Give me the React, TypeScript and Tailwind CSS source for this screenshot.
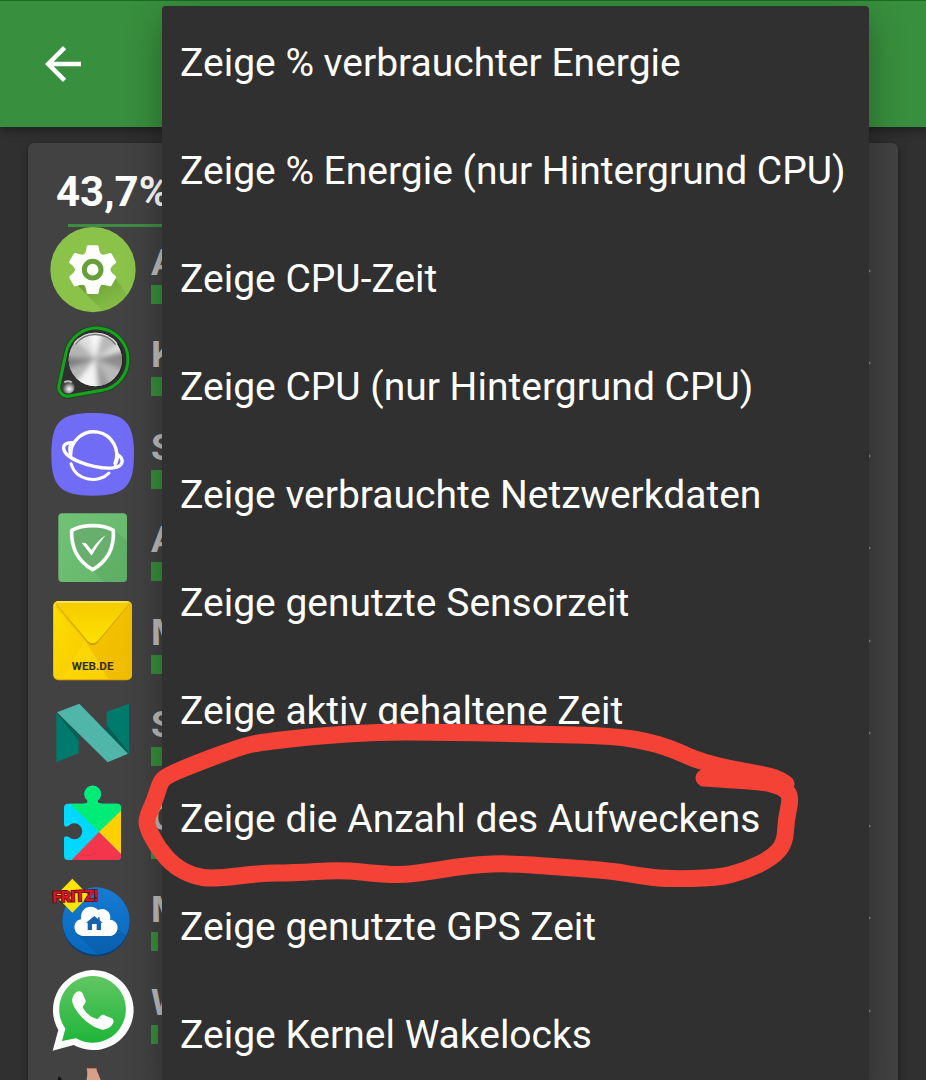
import type { ReactNode } from "react";
import { MdArrowBack } from "react-icons/md";

const menuItems = [
  "Zeige % verbrauchter Energie",
  "Zeige % Energie (nur Hintergrund CPU)",
  "Zeige CPU-Zeit",
  "Zeige CPU (nur Hintergrund CPU)",
  "Zeige verbrauchte Netzwerkdaten",
  "Zeige genutzte Sensorzeit",
  "Zeige aktiv gehaltene Zeit",
  "Zeige die Anzahl des Aufweckens",
  "Zeige genutzte GPS Zeit",
  "Zeige Kernel Wakelocks",
];

function Icon({ top, children }: { top: number; children: ReactNode }) {
  return (
    <svg viewBox={`78 ${top} 276 276`} className="size-[92px] shrink-0" aria-hidden="true">
      {children}
    </svg>
  );
}

function AndroidIcon() {
  return (
    <Icon top={12}>
      <defs>
        <clipPath id="android-disc">
          <circle cx="219" cy="149" r="128" />
        </clipPath>
        <linearGradient id="android-shade" x1="0" y1="0" x2="1" y2="1">
          <stop offset="0.1" stopColor="#4f7d25" stopOpacity="0.6" />
          <stop offset="0.75" stopColor="#6da035" stopOpacity="0.1" />
        </linearGradient>
      </defs>
      <circle cx="219" cy="149" r="128" fill="#8bc34a" />
      <path clipPath="url(#android-disc)" d="M160 184L270 294H370L286 174Z" fill="url(#android-shade)" />
      <g fill="#fff">
        <circle cx="218" cy="149" r="53" />
        {[0, 60, 120, 180, 240, 300].map((angle) => (
          <path
            key={angle}
            transform={`rotate(${angle} 218 149)`}
            d="M190 106Q198 98 200 80Q201 76 205 76H231Q235 76 236 80Q238 98 246 106Z"
          />
        ))}
      </g>
      <circle cx="218" cy="149" r="25" fill="#fff" stroke="#689f38" strokeWidth="15" />
    </Icon>
  );
}

function KnobIcon() {
  const wedges = [
    [0, 22, "#8f8f8f"],
    [22, 60, "#b9b9b9"],
    [60, 85, "#9c9c9c"],
    [85, 130, "#f4f4f4"],
    [130, 160, "#b5b5b5"],
    [160, 185, "#7f7f7f"],
    [185, 225, "#b5b5b5"],
    [225, 255, "#dedede"],
    [255, 285, "#f8f8f8"],
    [285, 325, "#b8b8b8"],
    [325, 345, "#e0e0e0"],
    [345, 360, "#858585"],
  ] as const;
  const body = "M138 399A94 94 0 1 1 246 511L148 528A27 27 0 0 1 117 496Z";
  return (
    <Icon top={288}>
      <defs>
        <clipPath id="knob-disc">
          <circle cx="226" cy="419" r="80" />
        </clipPath>
        <filter id="knob-soft">
          <feGaussianBlur stdDeviation="8" />
        </filter>
        <radialGradient id="knob-ball" cx="0.6" cy="0.65">
          <stop offset="0" stopColor="#fff" />
          <stop offset="0.5" stopColor="#aaa" />
          <stop offset="1" stopColor="#444" />
        </radialGradient>
      </defs>
      <path d={body} fill="#333" stroke="#1d4a1e" strokeWidth="15" strokeLinejoin="round" />
      <path d={body} fill="#303030" stroke="#16a41e" strokeWidth="9" strokeLinejoin="round" />
      <circle cx="228" cy="419" r="83" fill="#242424" />
      <g clipPath="url(#knob-disc)">
        <rect x="140" y="330" width="180" height="180" fill="#aaa" />
        <g filter="url(#knob-soft)">
          {wedges.map(([from, to, fill]) => {
            const a = (from * Math.PI) / 180;
            const b = (to * Math.PI) / 180;
            return (
              <path
                key={from}
                fill={fill}
                d={`M226 417L${226 + 120 * Math.cos(a)} ${417 + 120 * Math.sin(a)}L${226 + 120 * Math.cos(b)} ${417 + 120 * Math.sin(b)}Z`}
              />
            );
          })}
        </g>
      </g>
      <path d="M163 372A80 80 0 0 1 290 372" fill="none" stroke="#d8d8d8" strokeWidth="7" />
      <path d="M166 373A76 76 0 0 1 287 374" fill="none" stroke="#777" strokeWidth="4" />
      <circle cx="144" cy="501" r="20" fill="url(#knob-ball)" />
      <path d="M133 487Q144 480 155 487" fill="none" stroke="#bbb" strokeWidth="6" />
    </Icon>
  );
}

function PlanetIcon() {
  return (
    <Icon top={27}>
      <path d="M218 39C315 39 342 66 342 163S315 287 218 287S94 260 94 163S121 39 218 39Z" fill="#706cf5" />
      <g fill="none" stroke="#fff" strokeWidth="10" strokeLinecap="round">
        <path d="M152 166A69 69 0 1 1 285 190" />
        <path d="M157 128C139 127 129 134 131 146C135 169 176 188 222 199C267 209 302 205 306 187C308 178 302 169 290 163" />
        <path d="M151 131Q145 145 151 166M293 163Q296 179 285 196" strokeWidth="7" />
        <path d="M153 191C168 244 238 251 267 219" strokeWidth="9" />
      </g>
    </Icon>
  );
}

function ShieldIcon() {
  return (
    <Icon top={303}>
      <defs>
        <linearGradient id="shield-bg" x1="0" y1="0" x2="1" y2="1">
          <stop offset="0" stopColor="#6fc276" />
          <stop offset="1" stopColor="#66b66c" />
        </linearGradient>
      </defs>
      <rect x="115" y="340" width="206" height="206" rx="12" fill="url(#shield-bg)" />
      <path d="M284 388L321 425V534Q321 546 309 546H252L218 512Z" fill="#4f9a56" opacity="0.3" />
      <path
        d="M218 377C241 377 262 381 280 391C283 442 265 482 218 509C171 482 153 442 155 391C174 381 195 377 218 377Z"
        fill="#68ae6d"
        stroke="#fff"
        strokeWidth="11"
        strokeLinejoin="round"
      />
      <path d="M185 428L197 429L215 450C228 430 241 416 257 405C242 425 227 444 215 467Z" fill="#fff" />
    </Icon>
  );
}

function WebDeIcon() {
  return (
    <Icon top={12}>
      <defs>
        <linearGradient id="mail-bg" x1="0" y1="0" x2="1" y2="0.5">
          <stop offset="0" stopColor="#ffdf00" />
          <stop offset="1" stopColor="#f2c100" />
        </linearGradient>
        <linearGradient id="mail-flap" x1="0" y1="0" x2="0" y2="1">
          <stop offset="0" stopColor="#f5cb00" />
          <stop offset="1" stopColor="#ffe100" />
        </linearGradient>
      </defs>
      <rect x="100" y="34" width="236" height="237" rx="15" fill="#e6ae00" />
      <rect x="100" y="33" width="236" height="234" rx="15" fill="url(#mail-bg)" />
      <path d="M103 48L195 154L225 198L265 267H321Q336 267 336 252V44Z" fill="#eeb900" opacity="0.55" />
      <path d="M195 151L125 267H265Z" fill="#ffdb09" opacity="0.6" />
      <path d="M107 43L203 158Q218 174 233 158L329 43Q325 36 318 36H118Q111 36 107 43Z" fill="#cda000" />
      <path d="M107 40L203 153Q218 167 233 153L329 40Q325 36 318 36H118Q111 36 107 40Z" fill="url(#mail-flap)" />
      <path d="M112 36H324" stroke="#fff3a0" strokeWidth="3" strokeLinecap="round" />
      <text x="218" y="239" textAnchor="middle" fill="#382e15" fontSize="35" fontWeight="700" fontFamily="Roboto, sans-serif">
        WEB.DE
      </text>
    </Icon>
  );
}

function NougatIcon() {
  return (
    <Icon top={288}>
      <path d="M109 370L176 436V490L109 516Z" fill="#007a6c" />
      <path d="M260 366L327 341V492L260 430Z" fill="#007a6c" />
      <path d="M112 372L176 453V420ZM260 405L323 482V492L258 430Z" fill="#065f55" />
      <path d="M111 367L178 341L324 491L263 517Z" fill="#4fb6a9" />
    </Icon>
  );
}

function PlayIcon() {
  return (
    <Icon top={27}>
      <defs>
        <clipPath id="puzzle">
          <path d="M144 101H190Q206 101 202 91A25 25 0 1 1 234 91Q230 101 246 101H291Q303 101 303 113V258Q303 270 291 270H144Q132 270 132 258V207Q132 194 146 201A24 24 0 1 0 146 167Q132 175 132 162V113Q132 101 144 101Z" />
        </clipPath>
      </defs>
      <g clipPath="url(#puzzle)">
        <rect x="120" y="40" width="190" height="240" fill="#00d8fd" />
        <path d="M150 101L120 77V40H310V116L237 186Z" fill="#00ec76" />
        <path d="M303 122L237 186L303 252Z" fill="#ffd000" />
        <path d="M237 186L153 272H303V252Z" fill="#f4364d" />
      </g>
    </Icon>
  );
}

function FritzIcon() {
  return (
    <Icon top={303}>
      <defs>
        <linearGradient id="fritz-bg" x1="0" y1="0" x2="0" y2="1">
          <stop offset="0" stopColor="#167bd2" />
          <stop offset="1" stopColor="#0868bd" />
        </linearGradient>
        <clipPath id="fritz-disc">
          <circle cx="228" cy="453" r="101" />
        </clipPath>
      </defs>
      <circle cx="228" cy="458" r="101" fill="#063f78" />
      <circle cx="228" cy="453" r="101" fill="url(#fritz-bg)" />
      <path clipPath="url(#fritz-disc)" d="M170 492L240 562H350V520L291 475Z" fill="#0a559b" opacity="0.4" />
      <path
        d="M190 498C157 496 155 452 183 448C180 413 213 400 234 420C256 409 276 429 270 449C303 452 299 498 267 498Z"
        fill="#fff"
      />
      <path d="M223 438L198 458H203V480H216V462H230V480H243V458H248L239 451V442H234V447Z" fill="#1761ae" />
      <path d="M157 326L207 377L157 428L107 377Z" fill="#ffe500" />
      <text
        x="97"
        y="395"
        transform="rotate(-2 160 380)"
        fill="#df1326"
        stroke="#560b13"
        strokeWidth="5"
        paintOrder="stroke"
        fontSize="46"
        fontWeight="800"
        fontFamily="Roboto, sans-serif"
      >
        FRITZ!
      </text>
    </Icon>
  );
}

function WhatsAppIcon() {
  return (
    <Icon top={42}>
      <defs>
        <linearGradient id="wa-bg" x1="0" y1="0" x2="0" y2="1">
          <stop offset="0" stopColor="#61c663" />
          <stop offset="1" stopColor="#1fb53a" />
        </linearGradient>
      </defs>
      <path d="M98 302L115 240A121 120 0 1 1 161 285Z" fill="#fff" />
      <path d="M126 273L136 236A100 100 0 1 1 168 265Z" fill="url(#wa-bg)" />
      <path
        d="M171 125C176 122 185 123 188 130L197 152C199 158 190 165 188 171C195 185 208 200 232 208C238 202 243 193 250 194L275 205C281 208 282 214 279 220C273 233 261 238 248 239C213 234 167 191 157 157C155 143 162 130 171 125Z"
        fill="#fff"
      />
    </Icon>
  );
}

function PortraitIcon() {
  return (
    <Icon top={318}>
      <path d="M199 352H229C229 368 242 378 243 400H197C202 383 204 367 199 352Z" fill="#d8a187" />
      <path d="M194 351H230V355H194Z" fill="#5b3b31" />
      <path d="M115 380Q118 378 123 384L128 400H112Z" fill="#111" />
    </Icon>
  );
}

const apps = [
  { letter: "A", bar: "w-[100px]", icon: <AndroidIcon /> },
  { letter: "K", bar: "w-[60px]", icon: <KnobIcon /> },
  { letter: "S", bar: "w-[40px]", icon: <PlanetIcon /> },
  { letter: "A", bar: "w-[30px]", icon: <ShieldIcon /> },
  { letter: "M", bar: "w-[20px]", icon: <WebDeIcon /> },
  { letter: "S", bar: "w-[12px]", icon: <NougatIcon /> },
  { letter: "G", bar: "w-[11px]", icon: <PlayIcon /> },
  { letter: "M", bar: "w-[7px]", icon: <FritzIcon /> },
  { letter: "W", bar: "w-[7px]", icon: <WhatsAppIcon /> },
  { letter: "", bar: "w-[7px]", icon: <PortraitIcon /> },
];

const strokePoints = [
  [704, 778], [733, 780], [765, 782], [785, 788], [791, 798], [786, 820], [785, 843], [772, 858],
  [745, 871], [717, 878], [667, 879], [640, 876], [613, 871], [560, 867], [503, 863], [463, 866],
  [433, 871], [403, 875], [380, 874], [343, 870], [290, 873], [263, 873], [213, 879], [193, 876],
  [174, 866], [158, 848], [147, 827], [147, 817], [155, 800], [160, 783], [166, 776], [197, 763],
  [243, 746], [263, 742], [317, 736], [377, 732], [437, 732], [537, 734], [613, 736], [645, 741],
  [670, 748], [703, 763], [753, 773], [775, 777], [786, 784],
];

function MarkerStroke() {
  const [first, ...rest] = strokePoints;
  let path = `M${first[0]} ${first[1]}`;
  rest.forEach(([x, y], i) => {
    const next = rest[i + 1];
    path += next ? `Q${x} ${y} ${(x + next[0]) / 2} ${(y + next[1]) / 2}` : `L${x} ${y}`;
  });
  return (
    <svg
      viewBox="130 715 680 180"
      className="pointer-events-none absolute left-[130px] top-[715px] h-[180px] w-[680px]"
      aria-hidden="true"
    >
      <path d={path} fill="none" stroke="#f44336" strokeWidth="17" strokeLinecap="round" strokeLinejoin="round" />
    </svg>
  );
}

export default function App() {
  return (
    <div className="relative h-screen overflow-hidden bg-[#303030] font-[Roboto,sans-serif] text-white">
      <header className="flex h-[127px] items-center border-t border-[#1b6a25] bg-[#388f3d] pl-[36px] shadow-[0_3px_10px_rgba(0,0,0,0.4)]">
        <button type="button" aria-label="Zurück">
          <MdArrowBack size={54} />
        </button>
      </header>

      <main className="mx-[28px] mt-4 rounded-md bg-[#424242] shadow-[0_2px_6px_rgba(0,0,0,0.4)]">
        <h1 className="px-[28px] pt-[25px] text-[42px] leading-[48px] font-bold">43,7%</h1>
        <div className="mx-[40px] mt-2 -mb-[3px] h-[3px] bg-[#3f8c46]" />
        <ul>
          {apps.map((app, index) => (
            <li key={index} className="flex h-[92px] items-start pr-[27px] pl-[18px] even:h-[93px]">
              {app.icon}
              <div className="ml-[13px] flex-1 pt-[19px]">
                <p className="h-10 text-[37px] leading-10 font-bold text-[#bdbdbd]">{app.letter}</p>
                <div className={`mt-[2px] h-[19px] bg-[#388e3c] ${app.bar}`} />
              </div>
              <svg viewBox="0 0 12 20" className="mt-[37px] h-5 w-3 fill-[#8a8a8a]" aria-hidden="true">
                <path d="M0 0L12 10L0 20Z" />
              </svg>
            </li>
          ))}
        </ul>
      </main>

      <div
        role="menu"
        className="absolute top-[6px] right-[57px] left-[162px] rounded-[4px] bg-[#303030] pt-[3px] shadow-[0_12px_36px_rgba(0,0,0,0.32)]"
      >
        {menuItems.map((item) => (
          <button
            key={item}
            type="button"
            role="menuitem"
            className="block h-[108px] w-full px-[18px] text-left text-[39px] leading-[48px] whitespace-nowrap"
          >
            {item}
          </button>
        ))}
      </div>

      <MarkerStroke />
    </div>
  );
}
